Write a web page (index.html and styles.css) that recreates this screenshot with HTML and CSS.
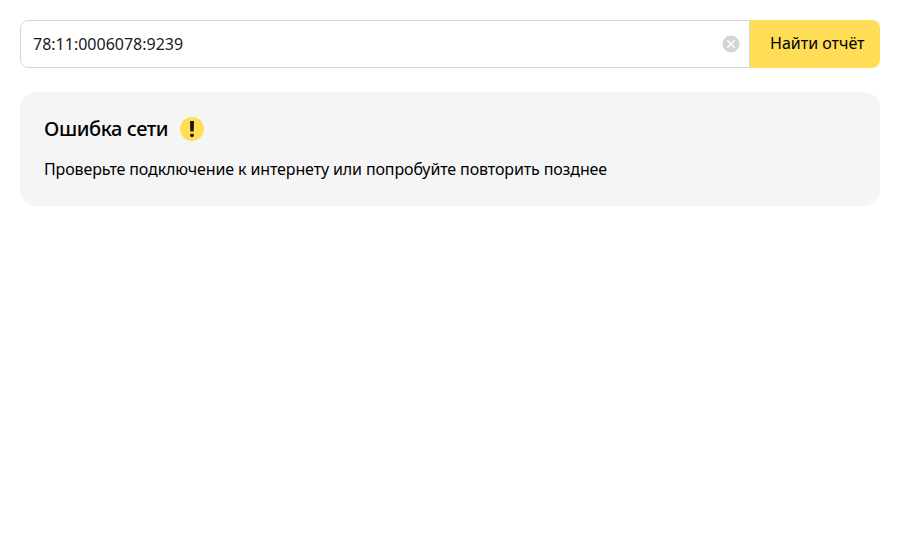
FILE: index.html
```html
<!DOCTYPE html>
<html lang="ru">
<head>
<meta charset="utf-8">
<title>Отчёт</title>
<link rel="stylesheet" href="styles.css">
</head>
<body>
<main class="page">
  <form class="search">
    <div class="search__field">
      <span class="search__value">78:11:0006078:9239</span>
      <svg class="search__clear" viewBox="0 0 18 18"><circle cx="9" cy="9" r="8.5" fill="#d5d5d5"/><path d="M5.3 5.3l7.4 7.4m0-7.4l-7.4 7.4" stroke="#fff" stroke-width="1.5"/></svg>
    </div>
    <button class="search__button" type="button">Найти отчёт</button>
  </form>
  <section class="notice">
    <div class="notice__head">
      <h1 class="notice__title">Ошибка сети</h1>
      <svg class="notice__icon" viewBox="0 0 24 24"><circle cx="12" cy="12" r="12" fill="#ffdd57"/><path d="M10 4h4l-.3 10.5h-3.4z" fill="#1a1608"/><circle cx="12" cy="18.3" r="1.9" fill="#1a1608"/></svg>
    </div>
    <p class="notice__text">Проверьте подключение к интернету или попробуйте повторить позднее</p>
  </section>
</main>
</body>
</html>
```
FILE: styles.css
```css
* { box-sizing: border-box; }
body { margin: 0; background: #fff; color: #000; font-family: "Noto Sans", sans-serif; font-size: 16px; }
.page { padding: 20px; }
.search { display: flex; height: 48px; margin: 0 0 24px; }
.search__field { flex: 1; display: flex; align-items: center; justify-content: space-between; padding: 0 9px 0 12px; border: 1px solid #d5d5d5; border-radius: 8px 0 0 8px; }
.search__value { color: #1a1a1a; font-size: 16px; line-height: 24px; }
.search__clear { width: 18px; height: 18px; }
.search__button { width: 130px; padding: 0 15px 2px 20px; border: 0; border-radius: 0 8px 8px 0; background: #ffdd57; color: #000; font: 16px/24px "Noto Sans", sans-serif; white-space: nowrap; text-align: left; }
.notice { height: 114px; padding: 24px; border-radius: 16px; background: #f5f5f5; }
.notice__head { display: flex; align-items: center; gap: 12px; height: 26px; }
.notice__title { margin: 0; width: 124px; font-size: 20px; line-height: 26px; font-weight: 500; letter-spacing: -0.42px; white-space: nowrap; }
.notice__icon { width: 24px; height: 24px; }
.notice__text { margin: 15px 0 0; font-size: 16px; line-height: 24px; letter-spacing: -0.125px; }
```
